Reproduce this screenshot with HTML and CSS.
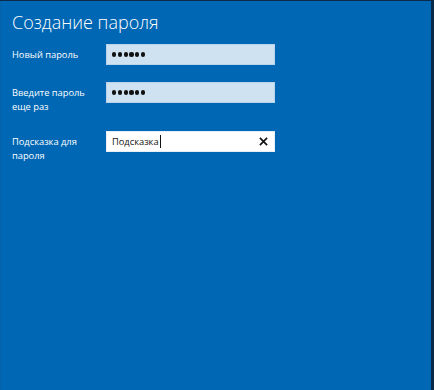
FILE: index.html
```html
<!DOCTYPE html>
<html lang="ru">
<head>
  <meta charset="UTF-8">
  <title>Создание пароля</title>
  <link rel="stylesheet" href="styles.css">
</head>
<body>
  <div class="panel">
    <h1 class="title">Создание пароля</h1>

    <div class="form">
      <div class="row">
        <label class="label">Новый пароль</label>
        <div class="field field-filled">
          <span class="dot"></span><span class="dot"></span><span class="dot"></span>
          <span class="dot"></span><span class="dot"></span><span class="dot"></span>
        </div>
      </div>

      <div class="row">
        <label class="label">Введите пароль<br>еще раз</label>
        <div class="field field-filled">
          <span class="dot"></span><span class="dot"></span><span class="dot"></span>
          <span class="dot"></span><span class="dot"></span><span class="dot"></span>
        </div>
      </div>

      <div class="row">
        <label class="label">Подсказка для<br>пароля</label>
        <div class="field field-active">
          <span class="value">Подсказка</span><span class="caret"></span>
          <svg class="clear" width="10" height="10" viewBox="0 0 10 10">
            <path d="M1 1 L9 9 M9 1 L1 9" stroke="#111" stroke-width="1.8" fill="none"/>
          </svg>
        </div>
      </div>
    </div>
  </div>
</body>
</html>
```

FILE: styles.css
```css
/* Page */
body {
  margin: 0;
  background-color: #0a2a4a;
  font-family: "Open Sans", "Noto Sans", sans-serif;
}

.panel {
  box-sizing: border-box;
  width: 431px;
  height: 389px;
  margin-top: 1px;
  background-color: #0067b4;
  border-left: 1px solid #0862a8;
  color: #fff;
  padding: 8px 0 0 11px;
}

.title {
  margin: 0;
  font-size: 18px;
  font-weight: 300;
  line-height: 26px;
}

/* Form rows */
.form {
  margin-top: 9px;
  display: flex;
  flex-direction: column;
  gap: 17px;
}

.row {
  display: flex;
  align-items: flex-start;
}

.label {
  width: 94px;
  padding-top: 4px;
  font-size: 9.3px;
  line-height: 14px;
}

.field {
  box-sizing: border-box;
  width: 169px;
  height: 21px;
  display: flex;
  align-items: center;
  padding: 0 5px;
  color: #111;
}

.field-filled {
  background-color: #cfe2f1;
  border: 1px solid #b9d3ea;
  gap: 1.6px;
}

.field-active {
  background-color: #fff;
  border: 1px solid #e6eef6;
}

.dot {
  width: 4.2px;
  height: 4.2px;
  border-radius: 50%;
  background-color: #111;
}

.value {
  font-size: 9.3px;
}

.caret {
  width: 1px;
  height: 13px;
  background-color: #111;
  margin-left: 1px;
}

.clear {
  width: 9px;
  height: 9px;
  margin-left: auto;
  margin-right: 1px;
}
```
